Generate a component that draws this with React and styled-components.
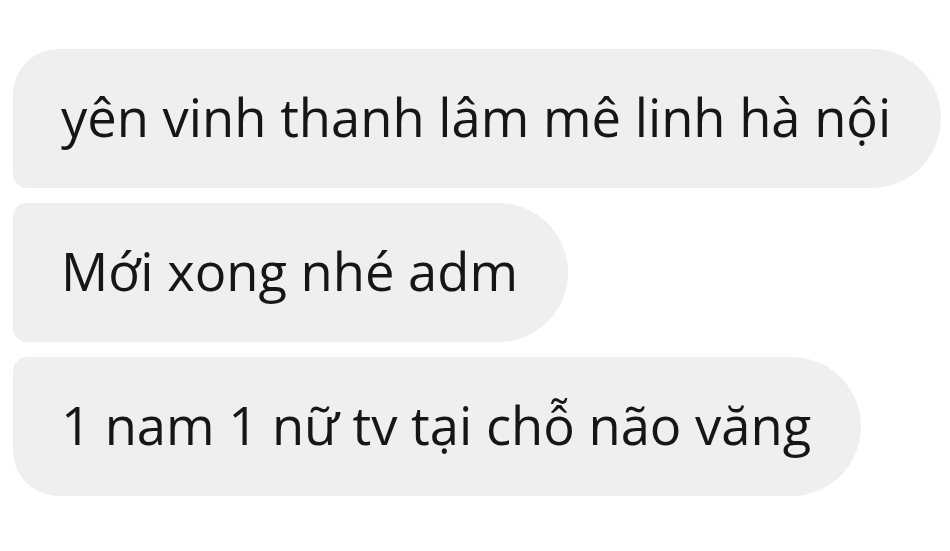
import styled, { createGlobalStyle } from "styled-components"

const GlobalStyle = createGlobalStyle`
  html, body {
    margin: 0;
    padding: 0;
    background: #ffffff;
  }
`

// region styled
const Thread = styled.div`
  display: flex;
  flex-direction: column;
  align-items: flex-start;
  gap: 15px;
  padding: 49px 0 0 13px;
  width: 950px;
  height: 551px;
  box-sizing: border-box;
`

const Bubble = styled.div`
  display: flex;
  align-items: center;
  height: 139px;
  box-sizing: border-box;
  padding: 0 50px 4px 48px;
  background: #efefef;
  color: #161616;
  font-family: "Open Sans", "Noto Sans", sans-serif;
  font-size: 52.5px;
  white-space: nowrap;
  border-radius: 70px;
  border-top-left-radius: ${(p) => (p.$first ? "46px" : "14px")};
  border-bottom-left-radius: ${(p) => (p.$last ? "46px" : "14px")};
`
// endregion

const messages = [
    "yên vinh thanh lâm mê linh hà nội",
    "Mới xong nhé adm",
    "1 nam 1 nữ tv tại chỗ não văng",
]

const App = () => {
    return (
        <>
            <GlobalStyle/>
            <Thread>
                {messages.map((text, i) => (
                    <Bubble key={i} $first={i === 0} $last={i === messages.length - 1}>
                        {text}
                    </Bubble>
                ))}
            </Thread>
        </>
    )
}

export default App;
